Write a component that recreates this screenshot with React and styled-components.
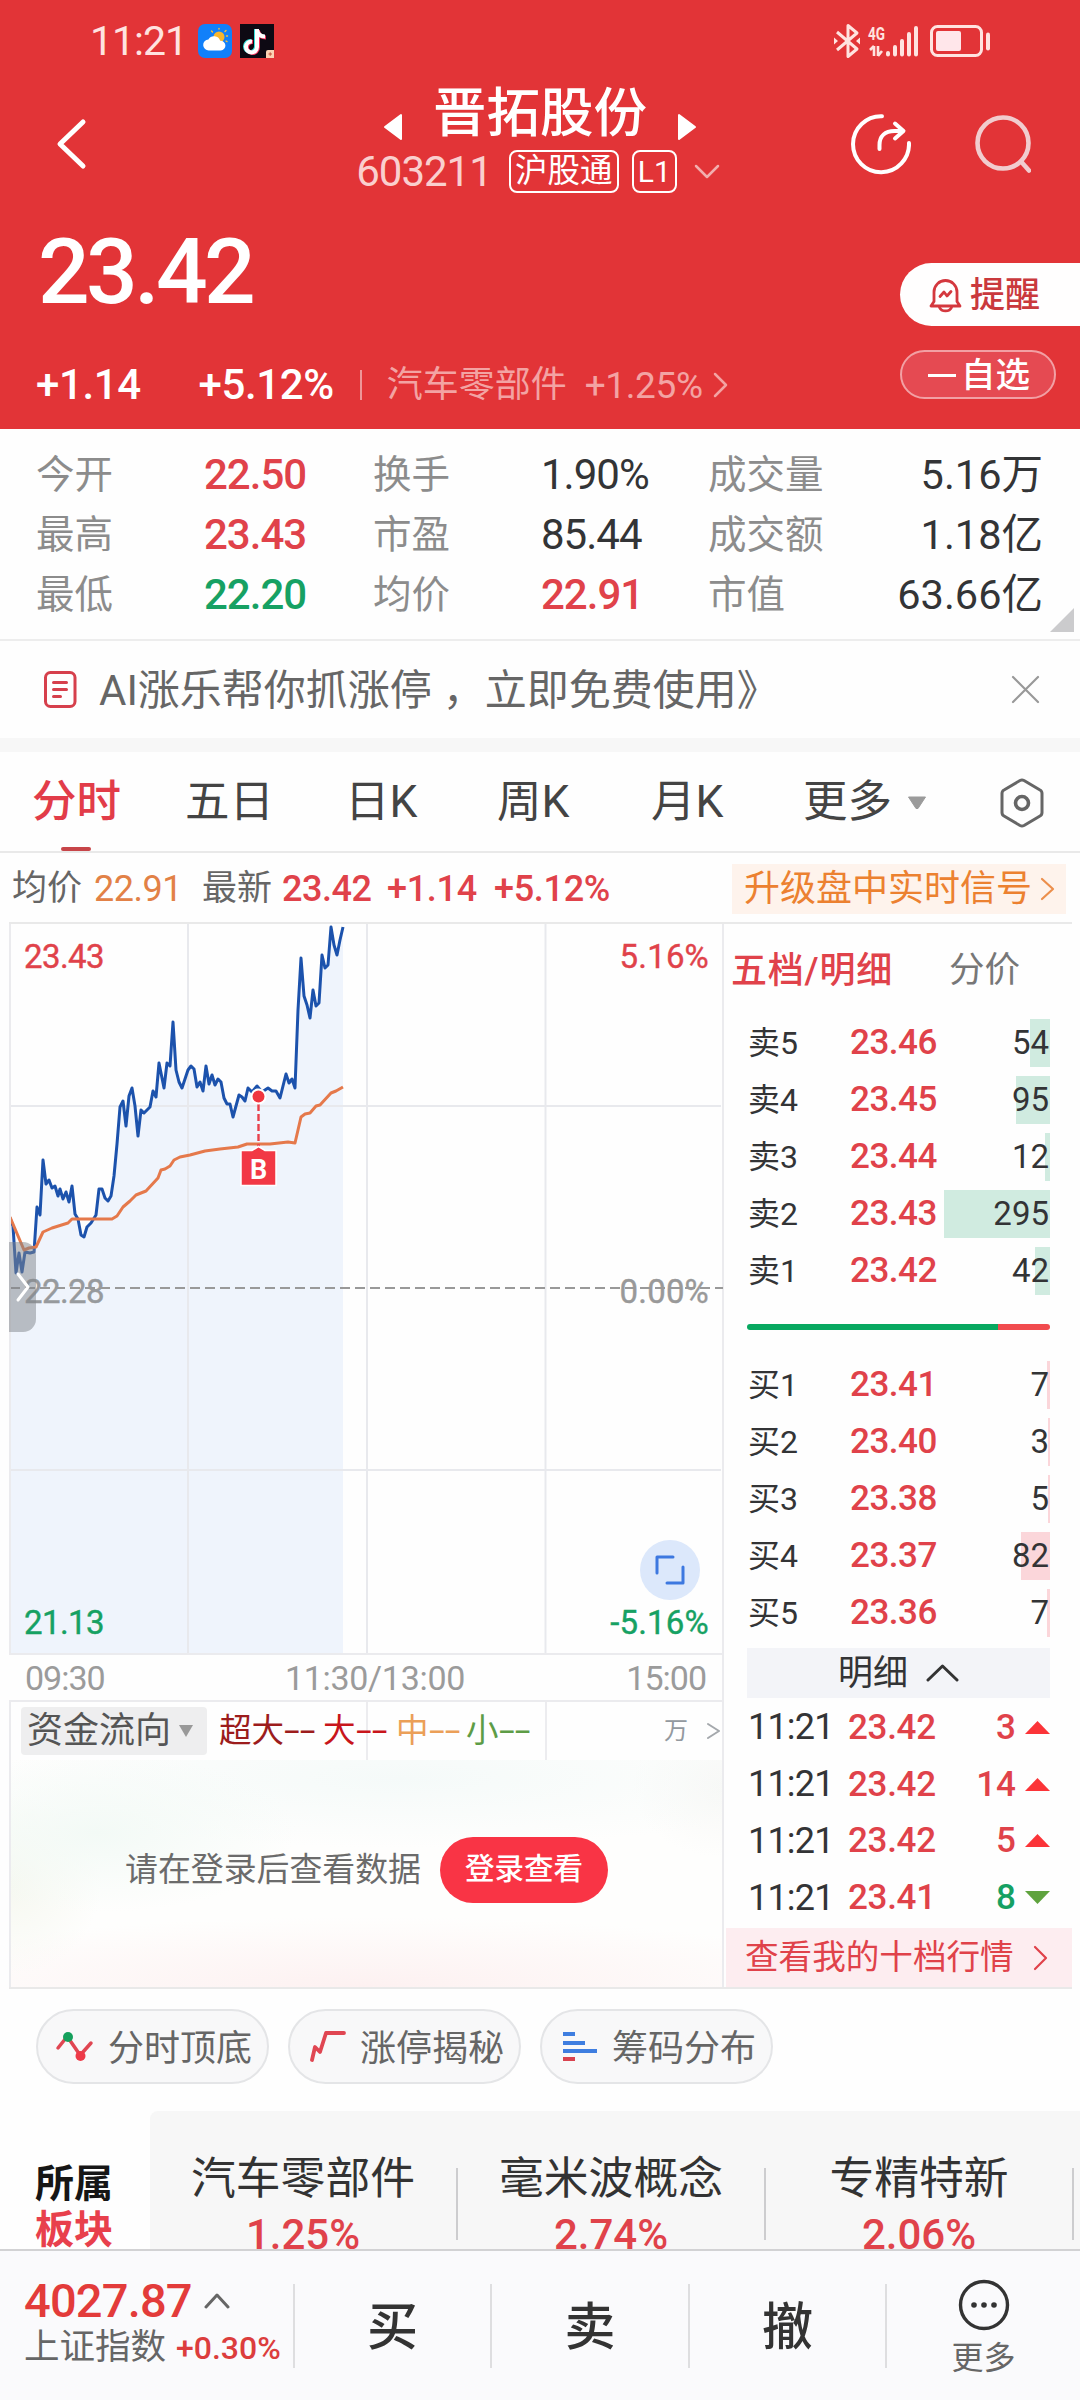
import styled, { createGlobalStyle } from 'styled-components';

const RED = '#e0424a';
const GREEN = '#16a163';
const DARK = '#333436';

const GlobalStyle = createGlobalStyle`
    * { box-sizing: border-box; }
    body {
        margin: 0;
        background: #fefefe;
        font-family: Roboto, "Noto Sans CJK SC", sans-serif;
        line-height: 1;
        -webkit-font-smoothing: antialiased;
    }
    svg { display: block; flex: none; }
`
const Screen = styled.div`
    width: 1080px;
    height: 2400px;
    display: flex;
    flex-direction: column;
    overflow: hidden;
    background: #fefefe;
`
// every run of text, only the values change
const Txt = styled.span`
    flex: none;
    white-space: nowrap;
    font-size: ${p => p.$size || 36}px;
    font-weight: ${p => p.$weight || 400};
    color: ${p => p.$color || DARK};
    letter-spacing: ${p => p.$ls || 0}px;
    margin-left: ${p => p.$ml || 0}px;
    margin-right: ${p => p.$mr || 0}px;
`

/* ---------- header ---------- */
const Header = styled.header`
    height: 429px;
    background: #e23437;
    display: flex;
    flex-direction: column;
`
const StatusBar = styled.div`
    height: 79px;
    padding: 3px 89px 0 90px;
    display: flex;
    justify-content: space-between;
    align-items: center;
`
const StatusGroup = styled.div`
    display: flex;
    align-items: center;
    gap: 8px;
`
const NavBar = styled.div`
    height: 130px;
    display: grid;
    grid-template-columns: 320px 1fr 320px;
`
const NavSide = styled.div`
    display: flex;
    align-items: center;
    height: 130px;
    gap: 64px;
    justify-content: ${p => p.$end ? 'flex-end' : 'flex-start'};
    padding: ${p => p.$end ? '0 49px 0 0' : '0 0 0 56px'};
`
const NavCenter = styled.div`
    display: flex;
    flex-direction: column;
    align-items: center;
`
const NameRow = styled.div`
    height: 66px;
    padding-top: 3px;
    display: flex;
    align-items: center;
    gap: 31px;
    svg { margin-top: 27px; }
`
const CodeRow = styled.div`
    display: flex;
    align-items: center;
    gap: 17px;
    height: 52px;
    margin-left: -4px;
    padding-top: 1px;
`
const Tags = styled.div`
    display: flex;
    gap: 13px;
`
const Tag = styled.span`
    height: 43px;
    display: flex;
    align-items: center;
    justify-content: center;
    width: ${p => p.$w}px;
    border: 2px solid #fff;
    border-radius: 8px;
    color: #fff;
    font-size: ${p => p.$size}px;
    flex: none;
`
const QuoteArea = styled.div`
    flex: 1;
    display: flex;
    justify-content: space-between;
`
const QuoteLeft = styled.div`
    display: flex;
    flex-direction: column;
`
const BigPrice = styled.div`
    height: 124px;
    padding: 18px 0 0 38px;
    font-size: 91px;
    font-weight: 500;
    color: #fff;
    letter-spacing: -3.6px;
`
const ChangeRow = styled.div`
    display: flex;
    align-items: center;
    height: 92px;
    padding: 12px 0 0 36px;
`
const Rule = styled.i`
    width: 2px;
    height: 30px;
    margin: 0 25px 0 26px;
    background: #ee9698;
`
const QuoteRight = styled.div`
    width: 180px;
    padding-top: 54px;
`
const RemindPill = styled.div`
    height: 63px;
    border-radius: 32px 0 0 32px;
    background: #fffefe;
    display: flex;
    align-items: center;
    padding: 2px 0 0 29px;
    gap: 8px;
`
const WatchPill = styled.div`
    width: 156px;
    height: 49px;
    margin-top: 24px;
    border: 2px solid #f2a0a4;
    border-radius: 25px;
    background: #e54a52;
    display: flex;
    align-items: center;
    padding: 2px 0 0 26px;
    gap: 5px;
    i { width: 28px; height: 3px; background: #fff; }
`

/* ---------- stats ---------- */
const Stats = styled.section`
    position: relative;
    height: 212px;
    padding: 16px 37px 0 36px;
    border-bottom: 2px solid #ededed;
    display: grid;
    grid-template-columns: 168px 169px 168px 167px 150px 1fr;
    grid-auto-rows: 60px;
    align-items: center;
`
const StatRight = styled(Txt)`
    text-align: right;
`
const Corner = styled.i`
    position: absolute;
    right: 6px;
    bottom: 7px;
    border-left: 24px solid transparent;
    border-bottom: 24px solid #cbcbcd;
`
const Notice = styled.div`
    height: 97px;
    padding: 0 40px 0 44px;
    display: flex;
    align-items: center;
`
const NoticeText = styled.div`
    flex: 1;
    margin-left: 22px;
    padding-top: 2px;
    font-size: 42px;
    color: #666;
    white-space: nowrap;
    span { padding-left: 11px; }
`
const Band = styled.div`
    height: 14px;
    background: #f7f7f7;
`
const Tabs = styled.nav`
    height: 101px;
    border-bottom: 2px solid #e9e9e9;
    display: grid;
    grid-template-columns: 153px 160px 152px 154px 152px 197px 1fr;
    padding-left: 32px;
`
const Tab = styled.div`
    position: relative;
    display: flex;
    align-items: center;
    gap: 15px;
    padding-top: 2px;
    font-size: 44.5px;
    font-weight: ${p => p.$active ? 500 : 400};
    color: ${p => p.$active ? '#e23c49' : '#444'};
    &::after {
        content: '';
        display: ${p => p.$active ? 'block' : 'none'};
        position: absolute;
        left: 29px;
        bottom: 0;
        width: 30px;
        height: 4px;
        border-radius: 2px;
        background: #c74549;
    }
`
const InfoLine = styled.div`
    height: 69px;
    padding: 2px 14px 0 12px;
    display: grid;
    grid-template-columns: 82px 108px 80px 105px 107px 1fr 334px;
    align-items: center;
`
const Upgrade = styled.div`
    height: 50px;
    background: #fef3ec;
    display: flex;
    align-items: center;
    justify-content: space-between;
    padding: 0 11px 0 12px;
`

/* ---------- main ---------- */
const Main = styled.main`
    height: 1067px;
    margin: 0 8px 0 9px;
    border-top: 2px solid #e9e9e9;
    border-bottom: 2px solid #e9e9e9;
    display: grid;
    grid-template-columns: 715px 1fr;
`
const ChartCol = styled.div`
    border-left: 2px solid #ebebee;
    border-right: 2px solid #ebebee;
    display: flex;
    flex-direction: column;
`
const ChartBox = styled.div`
    position: relative;
    height: 729px;
    margin-right: -2px;
`
const Drawer = styled.div`
    position: absolute;
    left: -2px;
    top: 318px;
    width: 27px;
    height: 90px;
    border-radius: 0 13px 13px 0;
    background: rgba(128, 132, 138, .5);
    display: flex;
    align-items: center;
    justify-content: center;
`
const Expand = styled.div`
    position: absolute;
    left: 629px;
    top: 616px;
    width: 60px;
    height: 60px;
    border-radius: 50%;
    background: #dce8fb;
    display: flex;
    align-items: center;
    justify-content: center;
`
const Axis = styled.div`
    height: 49px;
    margin-left: -2px;
    background: #fefefe;
    border-bottom: 2px solid #ebebee;
    border-top: 2px solid #ebebee;
    display: grid;
    grid-template-columns: 1fr 1fr 1fr;
    align-items: center;
    padding: 0 16px;
    span:nth-child(2) { text-align: center; margin-left: 19px; }
    span:nth-child(3) { text-align: right; }
`
const FlowRow = styled.div`
    height: 58px;
    display: flex;
    align-items: center;
    padding: 0 1px 0 10px;
    background:
        linear-gradient(#ececef, #ececef) 355px 0 / 2px 58px no-repeat,
        linear-gradient(#ececef, #ececef) 534px 0 / 2px 58px no-repeat;
`
const FlowSelect = styled.div`
    width: 186px;
    height: 48px;
    margin-right: 12px;
    background: #eeeeef;
    border-radius: 4px;
    display: flex;
    align-items: center;
    justify-content: space-between;
    padding: 0 14px 0 6px;
`
const FlowItem = styled(Txt)`
    width: ${p => p.$w}px;
    display: flex;
    b {
        font-weight: 400;
        transform: scaleX(1.75);
        transform-origin: left;
    }
`
const FlowEnd = styled.div`
    flex: 1;
    display: flex;
    justify-content: flex-end;
    align-items: center;
    gap: 19px;
`
const LoginPanel = styled.div`
    flex: 1;
    display: flex;
    align-items: center;
    padding: 0 0 7px 114px;
    gap: 19px;
    background:
        radial-gradient(ellipse 200px 80px at 12% 32%, #f3faf6, transparent),
        radial-gradient(ellipse 420px 70px at 55% 8%, #f5faf9, transparent),
        radial-gradient(ellipse 90px 70px at 100% 12%, #f8f8f6, transparent),
        radial-gradient(ellipse 90px 90px at 0 55%, #f6f8f0, transparent),
        radial-gradient(ellipse 520px 70px at 50% 100%, #fdf1f1, transparent),
        #fefefd;
`
const LoginButton = styled.button`
    width: 168px;
    height: 66px;
    border: 0;
    border-radius: 33px;
    background: #f93445;
    color: #fff;
    font: 500 29.5px Roboto, "Noto Sans CJK SC", sans-serif;
    line-height: 1;
    padding: 0;
`

/* ---------- order book ---------- */
const Book = styled.aside`
    display: flex;
    flex-direction: column;
    padding-left: 2px;
`
const BookTabs = styled.div`
    height: 90px;
    padding: 4px 0 0 5px;
    display: flex;
    align-items: center;
    gap: 56px;
`
const BookRow = styled.div`
    height: 57px;
    padding: 0 22px;
    display: grid;
    grid-template-columns: 102px 1fr 110px;
    align-items: center;
`
const Volume = styled.div`
    height: 48px;
    display: flex;
    align-items: center;
    justify-content: flex-end;
    padding-right: 1px;
    font-size: 33px;
    color: ${DARK};
    background: linear-gradient(${p => p.$sell ? '#d0ebe0, #d0ebe0' : '#fbd6da, #fbd6da'}) right / ${p => p.$bar}px 48px no-repeat;
`
const Ratio = styled.div`
    height: 6px;
    margin: 25px 22px 26px 21px;
    border-radius: 3px;
    background: linear-gradient(90deg, #08a860 83%, #f14b4e 83%);
`
const DetailBar = styled.div`
    height: 50px;
    margin: 7px 22px 1px 21px;
    background: #f3f4f8;
    display: flex;
    align-items: center;
    justify-content: center;
    gap: 18px;
`
const TradeRow = styled.div`
    height: 56.8px;
    padding: 0 22px;
    display: grid;
    grid-template-columns: 100px 110px 1fr 34px;
    align-items: center;
    justify-items: start;
    > :nth-child(3), > svg { justify-self: end; }
`
const TenLevel = styled.div`
    flex: 1;
    margin-top: 2px;
    background: #fdedf0;
    display: flex;
    align-items: center;
    padding: 0 24px 0 19px;
    justify-content: space-between;
`

/* ---------- bottom ---------- */
const Chips = styled.div`
    height: 122px;
    padding: 20px 36px 0;
    display: flex;
    gap: 19px;
`
const Chip = styled.div`
    width: 233px;
    height: 75px;
    border: 2px solid #e4e5e7;
    border-radius: 38px;
    background: #f8f8f9;
    display: flex;
    align-items: center;
    padding-left: 16px;
    gap: 14px;
    span { padding-top: 5px; }
`
const Plates = styled.section`
    height: 138px;
    display: flex;
    overflow: hidden;
`
const PlateLabel = styled.div`
    width: 150px;
    padding: 50px 0 0 35px;
    font-size: 39px;
    font-weight: 700;
    line-height: 46px;
    color: #161616;
    em { font-style: normal; color: #e8404c; display: block; }
`
const PlateList = styled.div`
    flex: 1;
    background: #f7f7f7;
    border-radius: 8px 0 0 0;
    display: flex;
`
const Plate = styled.div`
    flex: none;
    width: 308px;
    height: 72px;
    margin-top: 57px;
    border-right: 2px solid #cdcdcf;
    display: flex;
    flex-direction: column;
    align-items: center;
    gap: 12px;
    > * { position: relative; top: -11px; }
`
const BottomBar = styled.footer`
    flex: 1;
    border-top: 2px solid #d2d2d4;
    background: #fafafc;
    display: grid;
    grid-template-columns: 293px 197px 198px 197px 1fr;
`
const IndexCell = styled.div`
    padding: 25px 0 0 24px;
    div { display: flex; align-items: center; height: 49px; }
    div + div { height: 46px; }
`
const Action = styled.div`
    height: 84px;
    margin-top: 33px;
    border-left: 2px solid #dedee0;
    display: flex;
    align-items: center;
    justify-content: center;
    padding-top: 2px;
    font-size: 51px;
    font-weight: 500;
    color: #333;
`
const More = styled(Action)`
    flex-direction: column;
    gap: 11px;
    padding-top: 1px;
`

const Chevron = ({ w, h, d, color, sw = 3 }) => (
    <svg width={w} height={h} viewBox={`0 0 ${w} ${h}`} fill="none" stroke={color} strokeWidth={sw} strokeLinecap="round" strokeLinejoin="round">
        <path d={d} />
    </svg>
)

const WeatherIcon = () => (
    <svg width="34" height="34" viewBox="0 0 34 34">
        <rect width="34" height="34" rx="7" fill="#1180fa" />
        <circle cx="21" cy="13" r="5.5" fill="#f8b62d" />
        <path d="M21 5v-.5M14.5 8l-1-1M27 7.500l1-1M28.500 12h1M28 17l1 .6" stroke="#f8c33c" strokeWidth="1.400" strokeLinecap="round" />
        <path d="M11 26.500a5.500 5.500 0 0 1-.6-11 6.500 6.500 0 0 1 11.800 1.200 4.900 4.900 0 0 1 .6 9.800z" fill="#fff" />
    </svg>
)

const TikTokIcon = () => (
    <svg width="34" height="34" viewBox="0 0 34 34" fill="none">
        <rect width="34" height="34" fill="#0d0913" />
        <g strokeWidth="4">
            <path d="M16 5v17.500a5.500 5.500 0 1 1-5-5.500M16 6c1 4 4 6.500 8 6.500" stroke="#35e0dc" />
            <path d="M18 6v17.500a5.500 5.500 0 1 1-5-5.500M18 7c1 4 4 6.500 8 6.500" stroke="#f0305a" />
            <path d="M17 5v18a5.500 5.500 0 1 1-5-5.500M17 6c1 4 4 6.500 8 6.500" stroke="#fff" />
        </g>
        <path d="M26 34v-6a2 2 0 0 1 2-2h6v8z" fill="#fbd2b4" />
        <path d="M28.500 30h3.500M30.200 28.300v3.500" stroke="#c2523c" />
    </svg>
)

const SignalIcons = () => (
    <svg width="157" height="36" viewBox="0 0 157 36" fill="none" stroke="#ffe3e0">
        <path d="M3 9l20 17-9 7.500V2.500L23 10 3 27" strokeWidth="3" strokeLinejoin="round" />
        <path d="M0 14.500l4 3.500-4 3.500zM26 14.500L22 18l4 3.500z" fill="#ffe3e0" stroke="none" />
        <text x="34" y="17" fontSize="18" fontWeight="700" fill="#ffe3e0" stroke="none" textLength="17" lengthAdjust="spacingAndGlyphs">4G</text>
        <path d="M40 23v10M40 23l-4 4M44 23v10M44 33l4-5" strokeWidth="2.600" />
        <g strokeWidth="4" strokeLinecap="round">
            <path d="M54 30v1.500M61 24v7.500M68 18v13.500M75 11v20.500M82 5v26.500" />
        </g>
        <rect x="97.500" y="3.500" width="50" height="29" rx="6" strokeWidth="3" />
        <rect x="102" y="8" width="25" height="20" rx="2" fill="#ffe6ea" stroke="none" />
        <path d="M154 11.500v14" strokeWidth="4" strokeLinecap="round" />
    </svg>
)

const ShareIcon = () => (
    <svg width="60" height="62" viewBox="0 0 60 62" fill="none" stroke="#fff" strokeWidth="4" strokeLinecap="round" strokeLinejoin="round">
        <path d="M31 3.200A28 28 0 1 0 58 30" />
        <path d="M28.500 36v-4c0-9 5.500-14 15-14h8M44 10.500l8.500 7.500-8.500 7.500" />
    </svg>
)

const SearchIcon = () => (
    <svg width="56" height="60" viewBox="0 0 56 60" fill="none" stroke="#f1ccce" strokeWidth="4.600" strokeLinecap="round">
        <circle cx="28" cy="29" r="25.500" />
        <path d="M46 47.500l8 9" />
    </svg>
)

const BellIcon = () => (
    <svg width="33" height="35" viewBox="0 0 33 35" fill="none" stroke="#d4383e" strokeWidth="2.800" strokeLinecap="round" strokeLinejoin="round">
        <path d="M5 23.500V14a11.500 11.500 0 0 1 23 0v9.500l3 4.500H2z" />
        <path d="M10.500 29.500c2 4.500 10 4.500 12 0M11 18.500l4-4.500 3 4 4-4.500" />
    </svg>
)

const price = [
    [10, 1218], [13, 1226], [16, 1273], [19, 1253], [22, 1272], [25, 1252], [30, 1253], [34, 1252], [37, 1207], [40, 1215],
    [43, 1160], [46, 1184], [49, 1180], [52, 1188], [55, 1186], [58, 1196], [60, 1189], [63, 1199], [66, 1192], [69, 1202],
    [72, 1186], [75, 1214], [78, 1219], [81, 1235], [84, 1237], [87, 1227], [91, 1223], [96, 1215], [99, 1189], [102, 1189],
    [105, 1198], [108, 1201], [111, 1196], [114, 1176], [117, 1144], [120, 1107], [123, 1101], [126, 1126], [129, 1096],
    [132, 1088], [135, 1106], [138, 1136], [141, 1110], [144, 1113], [150, 1107], [153, 1091], [156, 1097], [159, 1063],
    [164, 1088], [167, 1063], [170, 1066], [173, 1022], [176, 1070], [179, 1082], [182, 1088], [188, 1070], [191, 1066],
    [194, 1069], [197, 1087], [200, 1082], [203, 1091], [206, 1066], [209, 1084], [212, 1075], [215, 1085], [218, 1079],
    [221, 1082], [224, 1098], [227, 1104], [230, 1104], [233, 1117], [239, 1095], [242, 1097], [245, 1101], [248, 1088],
    [252, 1092], [257, 1086], [262, 1092], [268, 1088], [272, 1091], [276, 1091], [280, 1098], [286, 1074], [289, 1083],
    [292, 1079], [295, 1088], [298, 1010], [301, 958], [304, 996], [307, 1005], [310, 1018], [313, 990], [316, 1006],
    [319, 1003], [322, 955], [325, 968], [328, 965], [331, 927], [334, 945], [337, 955], [340, 940], [343, 927],
]
const average = [
    [10, 1217], [24, 1250], [29, 1248], [36, 1247], [43, 1232], [52, 1228], [68, 1223], [72, 1219], [112, 1219], [117, 1216],
    [123, 1207], [130, 1201], [136, 1195], [146, 1191], [158, 1178], [161, 1170], [165, 1169], [170, 1166], [174, 1160],
    [180, 1157], [190, 1155], [205, 1151], [220, 1149], [238, 1147], [247, 1144], [270, 1144], [288, 1142], [295, 1143],
    [301, 1117], [305, 1114], [310, 1113], [316, 1106], [320, 1105], [331, 1093], [336, 1091], [343, 1087],
]
const toPath = list => 'M' + list.map(([x, y]) => `${x} ${y}`).join('L')

const ChartText = ({ x, y, fill, end, children }) => (
    <text x={x} y={y} fill={fill} stroke={fill} strokeWidth=".4" fontSize="33" letterSpacing={end ? 0.2 : -0.6} textAnchor={end ? 'end' : 'start'}>{children}</text>
)

const Chart = () => (
    <svg width="713" height="729" viewBox="11 924 713 729" fill="none">
        <path d={`${toPath(price)}V1653H10Z`} fill="#eff4fc" />
        <path d="M188 924V1653M367 924V1653M545.500 924V1653M10 1106H721M10 1470H721" stroke="#e8e9ed" strokeWidth="2" />
        <path d="M10 1288H723" stroke="#999" strokeWidth="2" strokeDasharray="10 5" />
        <path d={toPath(price)} stroke="#1c52ac" strokeWidth="3" strokeLinejoin="round" />
        <path d={toPath(average)} stroke="#e5794b" strokeWidth="3" strokeLinejoin="round" />
        <path d="M258.500 1104V1150" stroke="#e8404c" strokeWidth="2.400" strokeDasharray="7 3" />
        <circle cx="258.500" cy="1096.500" r="7" fill="#f0353f" stroke="#fff" strokeWidth="2" />
        <path d="M241 1150.500h11l6.500-4 6.500 4h11v35h-35z" fill="#f23845" stroke="#fff" strokeWidth="1.500" />
        <text x="258.500" y="1179" fontSize="27" fontWeight="700" fill="#fff" textAnchor="middle">B</text>
        <ChartText x="24" y="968" fill={RED}>23.43</ChartText>
        <ChartText x="709" y="968" fill={RED} end>5.16%</ChartText>
        <ChartText x="24" y="1303" fill="#979a9d">22.28</ChartText>
        <ChartText x="709" y="1303" fill="#999" end>0.00%</ChartText>
        <ChartText x="24" y="1634" fill={GREEN}>21.13</ChartText>
        <ChartText x="709" y="1634" fill={GREEN} end>-5.16%</ChartText>
    </svg>
)

const stats = [
    ['今开', '22.50', RED, '换手', '1.90%', DARK, '成交量', '5.16万'],
    ['最高', '23.43', RED, '市盈', '85.44', DARK, '成交额', '1.18亿'],
    ['最低', '22.20', GREEN, '均价', '22.91', RED, '市值', '63.66亿'],
]
const flows = [['超大', 104, '#9c1c1c'], ['大', 73, '#c8151b'], ['中', 70, '#eb9f58'], ['小', 70, '#5d9c46']]
const sells = [['卖5', '23.46', 54, 20], ['卖4', '23.45', 95, 34], ['卖3', '23.44', 12, 5], ['卖2', '23.43', 295, 106], ['卖1', '23.42', 42, 15]]
const buys = [['买1', '23.41', 7, 3], ['买2', '23.40', 3, 2], ['买3', '23.38', 5, 2], ['买4', '23.37', 82, 29], ['买5', '23.36', 7, 3]]
const trades = [['23.42', 3, true], ['23.42', 14, true], ['23.42', 5, true], ['23.41', 8, false]]
const plates = [['汽车零部件', '1.25%'], ['毫米波概念', '2.74%'], ['专精特新', '2.06%']]

const Orders = ({ rows, sell }) => rows.map(([name, value, volume, bar]) => (
    <BookRow key={name}>
        <Txt $size={32}>{name}</Txt>
        <Txt $size={35} $weight={500} $color={RED} $ls={-0.5}>{value}</Txt>
        <Volume $sell={sell} $bar={bar}>{volume}</Volume>
    </BookRow>
))

const App = () => {
    return (
        <Screen>
            <GlobalStyle />
            <Header>
                <StatusBar>
                    <StatusGroup>
                        <Txt $size={41} $color="#ffe3e0" $ls={-1} $mr={3}>11:21</Txt>
                        <WeatherIcon />
                        <TikTokIcon />
                    </StatusGroup>
                    <SignalIcons />
                </StatusBar>
                <NavBar>
                    <NavSide>
                        <Chevron w={32} h={52} d="M27 4L4 26L27 48" color="#fff" sw={5} />
                    </NavSide>
                    <NavCenter>
                        <NameRow>
                            <svg width="19" height="28" viewBox="0 0 19 28"><path d="M18 2v24L2 14z" fill="#fff" stroke="#fff" strokeWidth="2" strokeLinejoin="round" /></svg>
                            <Txt $size={53.500} $weight={500} $color="#fff">晋拓股份</Txt>
                            <svg width="19" height="28" viewBox="0 0 19 28"><path d="M1 2v24l16-12z" fill="#fff" stroke="#fff" strokeWidth="2" strokeLinejoin="round" /></svg>
                        </NameRow>
                        <CodeRow>
                            <Txt $size={42} $color="#facfce" $ls={-1}>603211</Txt>
                            <Tags>
                                <Tag $w={110} $size={32.500}>沪股通</Tag>
                                <Tag $w={45} $size={30}>L1</Tag>
                            </Tags>
                            <Chevron w={26} h={16} d="M2 2L13 13L24 2" color="#f2aeae" sw={2.5} />
                        </CodeRow>
                    </NavCenter>
                    <NavSide $end>
                        <ShareIcon />
                        <SearchIcon />
                    </NavSide>
                </NavBar>
                <QuoteArea>
                    <QuoteLeft>
                        <BigPrice>23.42</BigPrice>
                        <ChangeRow>
                            <Txt $size={42} $weight={500} $color="#fff" $ls={-0.4}>+1.14</Txt>
                            <Txt $size={42} $weight={500} $color="#fff" $ls={-0.4} $ml={58}>+5.12%</Txt>
                            <Rule />
                            <Txt $size={36} $color="#f3a3a3">汽车零部件</Txt>
                            <Txt $size={37} $color="#f3a3a3" $ls={-0.4} $ml={18} $mr={10}>+1.25%</Txt>
                            <Chevron w={16} h={28} d="M2 3L13 14L2 25" color="#f3a3a3" sw={2.5} />
                        </ChangeRow>
                    </QuoteLeft>
                    <QuoteRight>
                        <RemindPill><BellIcon /><Txt $size={35} $weight={500} $color="#ca393d">提醒</Txt></RemindPill>
                        <WatchPill><i /><Txt $size={34.500} $weight={500} $color="#fff">自选</Txt></WatchPill>
                    </QuoteRight>
                </QuoteArea>
            </Header>

            <Stats>
                {stats.map(([l1, v1, c1, l2, v2, c2, l3, v3]) => [
                    <Txt key={l1} $size={38.500} $color="#8c8c8c">{l1}</Txt>,
                    <Txt key={l1 + 'v'} $size={42} $color={c1} $weight={500} $ls={-1}>{v1}</Txt>,
                    <Txt key={l2} $size={38.500} $color="#8c8c8c">{l2}</Txt>,
                    <Txt key={l2 + 'v'} $size={42} $color={c2} $weight={c2 === RED ? 500 : 400} $ls={-1}>{v2}</Txt>,
                    <Txt key={l3} $size={38.500} $color="#8c8c8c">{l3}</Txt>,
                    <StatRight key={l3 + 'v'} $size={41.500}>{v3}</StatRight>,
                ])}
                <Corner />
            </Stats>
            <Notice>
                <svg width="33" height="37" viewBox="0 0 33 37" fill="none" stroke="#d6404c" strokeWidth="3" strokeLinecap="round">
                    <rect x="1.500" y="1.500" width="29.500" height="34" rx="5" />
                    <path d="M9.500 11.500h13M9.500 18.500h13M9.500 25.500h7" />
                </svg>
                <NoticeText>AI涨乐帮你抓涨停<span>，</span>立即免费使用》</NoticeText>
                <Chevron w={29} h={29} d="M2 2L27 27M27 2L2 27" color="#999" sw={2.2} />
            </Notice>
            <Band />
            <Tabs>
                <Tab $active>分时</Tab>
                <Tab>五日</Tab>
                <Tab>日K</Tab>
                <Tab>周K</Tab>
                <Tab>月K</Tab>
                <Tab>更多<svg width="20" height="14" viewBox="0 0 20 14"><path d="M1.500 1h17L11 12.500H9z" fill="#9b9b9b" stroke="#9b9b9b" strokeLinejoin="round" /></svg></Tab>
                <Tab>
                    <svg width="44" height="50" viewBox="0 0 44 50" fill="none" stroke="#666" strokeWidth="3" strokeLinejoin="round">
                        <path d="M20 2.500q2-1 4 0L40 12q2 1 2 3.500v19q0 2.500-2 3.500L24 47.500q-2 1-4 0L4 38q-2-1-2-3.500v-19Q2 13 4 12z" />
                        <circle cx="22" cy="25" r="6.500" strokeWidth="3.600" />
                    </svg>
                </Tab>
            </Tabs>
            <InfoLine>
                <Txt $size={35} $color="#666">均价</Txt>
                <Txt $size={36} $color="#e28146" $ls={-0.5}>22.91</Txt>
                <Txt $size={35} $color="#666">最新</Txt>
                <Txt $size={36} $color={RED} $weight={500} $ls={-0.5}>23.42</Txt>
                <Txt $size={36} $color={RED} $weight={500} $ls={-0.3}>+1.14</Txt>
                <Txt $size={36} $color={RED} $weight={500} $ls={-0.3}>+5.12%</Txt>
                <Upgrade>
                    <Txt $size={36} $color="#ec8130">升级盘中实时信号</Txt>
                    <Chevron w={15} h={26} d="M2 3L13 13L2 23" color="#ec8f4c" sw={2.2} />
                </Upgrade>
            </InfoLine>

            <Main>
                <ChartCol>
                    <ChartBox>
                        <Chart />
                        <Drawer><Chevron w={16} h={32} d="M3 3L13 16L3 29" color="#fff" sw={3} /></Drawer>
                        <Expand><Chevron w={32} h={32} d="M3 19V3H19M29 13V29H13" color="#3d78e0" sw={3} /></Expand>
                    </ChartBox>
                    <Axis>
                        <Txt $size={34} $color="#9b9b9b" $ls={-1}>09:30</Txt>
                        <Txt $size={34} $color="#9b9b9b" $ls={-0.3}>11:30/13:00</Txt>
                        <Txt $size={34} $color="#9b9b9b" $ls={-1}>15:00</Txt>
                    </Axis>
                    <FlowRow>
                        <FlowSelect>
                            <Txt $size={36} $color="#555">资金流向</Txt>
                            <svg width="14" height="12" viewBox="0 0 14 12"><path d="M0 0h14L7 12z" fill="#999" /></svg>
                        </FlowSelect>
                        {flows.map(([name, w, color]) => (
                            <FlowItem key={name} $w={w} $size={32.500} $color={color}>{name}<b>--</b></FlowItem>
                        ))}
                        <FlowEnd>
                            <Txt $size={24} $color="#93999f">万</Txt>
                            <Chevron w={14} h={20} d="M1 3L12 10L1 17" color="#a4a8ac" sw={2} />
                        </FlowEnd>
                    </FlowRow>
                    <LoginPanel>
                        <Txt $size={32.900} $color="#6b6b6b">请在登录后查看数据</Txt>
                        <LoginButton>登录查看</LoginButton>
                    </LoginPanel>
                </ChartCol>

                <Book>
                    <BookTabs>
                        <Txt $size={36} $color={RED} $weight={500} $ls={0.8}>五档/明细</Txt>
                        <Txt $size={35.500} $color="#777">分价</Txt>
                    </BookTabs>
                    <Orders rows={sells} sell />
                    <Ratio />
                    <Orders rows={buys} />
                    <DetailBar>
                        <Txt $size={35}>明细</Txt>
                        <Chevron w={33} h={18} d="M2 16L16.500 2L31 16" color="#333" sw={3} />
                    </DetailBar>
                    {trades.map(([value, volume, up], i) => (
                        <TradeRow key={i}>
                            <Txt $size={36} $ls={-0.8}>11:21</Txt>
                            <Txt $size={35} $weight={500} $color={RED} $ls={-0.3}>{value}</Txt>
                            <Txt $size={35} $weight={500} $color={up ? RED : GREEN}>{volume}</Txt>
                            <svg width="25" height="13" viewBox="0 0 25 13">
                                <path d={up ? 'M0 13L12.500 0L25 13z' : 'M0 0L12.500 13L25 0z'} fill={up ? '#fb3438' : '#5fa33e'} />
                            </svg>
                        </TradeRow>
                    ))}
                    <TenLevel>
                        <Txt $size={33.600} $color={RED}>查看我的十档行情</Txt>
                        <Chevron w={15} h={26} d="M2 2L13 13L2 24" color={RED} sw={2.2} />
                    </TenLevel>
                </Book>
            </Main>

            <Chips>
                <Chip>
                    <svg width="40" height="34" viewBox="0 0 40 34" fill="none" stroke="#e04652" strokeWidth="3.500" strokeLinecap="round">
                        <path d="M4 18l8-10M15 9l11 16M29 22l8-9" />
                        <circle cx="14" cy="7" r="5" fill="#15a05c" stroke="none" />
                        <circle cx="26.500" cy="26" r="5" fill="#ee3a48" stroke="none" />
                    </svg>
                    <Txt $size={36} $color="#666">分时顶底</Txt>
                </Chip>
                <Chip>
                    <svg width="40" height="34" viewBox="0 0 40 34" fill="none" stroke="#e04652" strokeWidth="3.800" strokeLinecap="round" strokeLinejoin="round">
                        <path d="M6 30l3-13 5 5 6-19h18" />
                    </svg>
                    <Txt $size={36} $color="#666">涨停揭秘</Txt>
                </Chip>
                <Chip>
                    <svg width="40" height="34" viewBox="0 0 40 34" strokeWidth="4" stroke="#3f7ee0">
                        <path d="M5 4h12M5 13h22M5 21h34" />
                        <path d="M5 29h12" stroke="#d9434f" />
                    </svg>
                    <Txt $size={36} $color="#666">筹码分布</Txt>
                </Chip>
            </Chips>

            <Plates>
                <PlateLabel>所属<em>板块</em></PlateLabel>
                <PlateList>
                    {plates.map(([name, rate]) => (
                        <Plate key={name}>
                            <Txt $size={44.800} $color="#333">{name}</Txt>
                            <Txt $size={42} $color={RED} $weight={500}>{rate}</Txt>
                        </Plate>
                    ))}
                </PlateList>
            </Plates>

            <BottomBar>
                <IndexCell>
                    <div>
                        <Txt $size={47} $weight={500} $color="#e33b3a" $ls={-0.8} $mr={12}>4027.87</Txt>
                        <Chevron w={26} h={16} d="M2 14L13 2L24 14" color="#666" sw={3} />
                    </div>
                    <div>
                        <Txt $size={35.500} $color="#666" $mr={10}>上证指数</Txt>
                        <Txt $size={32} $color="#dc3d3d" $weight={500}>+0.30%</Txt>
                    </div>
                </IndexCell>
                <Action>买</Action>
                <Action>卖</Action>
                <Action>撤</Action>
                <More>
                    <svg width="52" height="52" viewBox="0 0 52 52">
                        <circle cx="26" cy="26" r="23.500" fill="none" stroke="#333" strokeWidth="3.400" />
                        <g fill="#333"><circle cx="16" cy="26" r="2.800" /><circle cx="26" cy="26" r="2.800" /><circle cx="36" cy="26" r="2.800" /></g>
                    </svg>
                    <Txt $size={32} $color="#666">更多</Txt>
                </More>
            </BottomBar>
        </Screen>
    )
}

export default App;
